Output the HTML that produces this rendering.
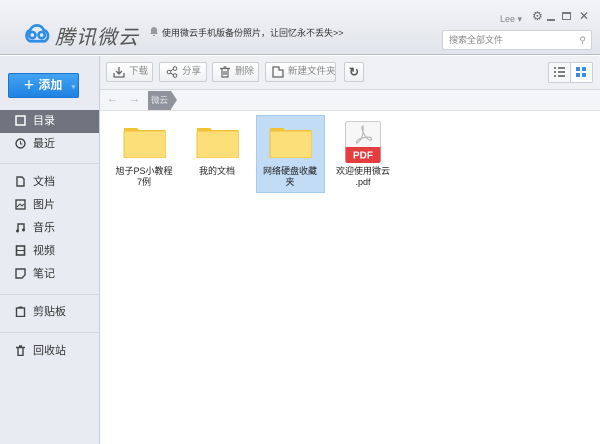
<!DOCTYPE html>
<html><head><meta charset="utf-8"><style>
*{margin:0;padding:0;box-sizing:border-box}
body{width:600px;height:444px;overflow:hidden;font-family:"Liberation Sans","Noto Sans CJK SC",sans-serif;font-size:10px;color:#333;background:#fff;position:relative}
.hdr{position:absolute;left:0;top:0;width:600px;height:55px;background:linear-gradient(#f3f4f7,#e1e4ea);border-bottom:1px solid #b5bac4}
.side{position:absolute;left:0;top:56px;width:100px;height:388px;background:#e8ebf1;border-right:1px solid #c7ccd5}
.tb{position:absolute;left:100px;top:56px;width:500px;height:34px;background:#eef0f4;border-bottom:1px solid #d5d9e0}
.nav{position:absolute;left:100px;top:90px;width:500px;height:21px;background:#f4f5f8;border-bottom:1px solid #dde0e6}
.btn{position:absolute;top:62px;height:20px;border:1px solid #c9cdd5;background:linear-gradient(#fff,#eef0f3);border-radius:2px;color:#888;font-size:9.5px;line-height:18px;padding-left:22px;white-space:nowrap;overflow:hidden}
.btn svg{position:absolute;left:6px;top:3px}
.item{position:absolute;left:0;width:99px;height:22px;line-height:22px;padding-left:33px;font-size:11px;color:#333}
.item svg{position:absolute;left:15px;top:5px}
.sep{position:absolute;left:0;width:99px;height:1px;background:#d3d7de}
.fold{position:absolute;width:43px;height:32px}
.lbl{position:absolute;font-size:9px;text-align:center;width:70px;line-height:11px;color:#222}
</style></head><body>
<div class="hdr">
<svg style="position:absolute;left:22px;top:22px" width="31" height="22" viewBox="0 0 30 20"><g fill="none" stroke="#2d8ee6" stroke-width="2.6"><path d="M8 18a6 6 0 0 1 0-11 7 7 0 0 1 13 0 6 6 0 0 1 1 11z"/><circle cx="10" cy="12" r="3"/><circle cx="19" cy="12" r="3"/></g></svg>
<div style="position:absolute;left:55px;top:21px;font-size:20px;font-style:italic;color:#555;letter-spacing:1px">腾讯微云</div>
<svg style="position:absolute;left:150px;top:27px" width="8" height="9" viewBox="0 0 8 9"><path d="M4 0a3 3 0 0 1 3 3v3l1 1H0l1-1V3a3 3 0 0 1 3-3zM3 8h2v1H3z" fill="#999"/></svg>
<div style="position:absolute;left:162px;top:26px;font-size:9px;color:#333">使用微云手机版备份照片，让回忆永不丢失&gt;&gt;</div>
<div style="position:absolute;left:500px;top:14px;font-size:9px;color:#888">Lee ▾</div>
<div style="position:absolute;left:532px;top:9px;font-size:12px;color:#666">⚙</div>
<div style="position:absolute;left:547px;top:19px;width:8px;height:2px;background:#777"></div>
<div style="position:absolute;left:562px;top:12px;width:9px;height:8px;border:1px solid #777;border-top-width:2px"></div>
<div style="position:absolute;left:579px;top:9px;font-size:12px;color:#666">✕</div>
<div style="position:absolute;left:442px;top:30px;width:150px;height:20px;background:#fff;border:1px solid #cdd1d8;border-radius:2px;font-size:9px;color:#888;line-height:18px;padding-left:6px">搜索全部文件<span style="position:absolute;right:5px;top:0;color:#999">⚲</span></div>
</div>
<div class="side">
<div style="position:absolute;left:8px;top:17px;width:71px;height:25px;background:linear-gradient(#43a3f2,#1f83e2);border:1px solid #1a74cc;border-radius:2px;color:#fff;font-size:12px;font-weight:bold;line-height:23px;padding-left:14px">＋ 添加 <span style="font-size:7px;color:#9cc9f3;margin-left:6px">▾</span></div>
<div class="item" style="top:54px;height:23px;background:#6f747f;color:#fff"><svg width="11" height="11"><rect x="1" y="1" width="9" height="9" fill="none" stroke="#fff" stroke-width="1.5"/></svg>目录</div>
<div class="item" style="top:77px"><svg width="11" height="11"><circle cx="5.5" cy="5.5" r="4.5" fill="none" stroke="#444" stroke-width="1.4"/><path d="M5.5 3v3h2" stroke="#444" fill="none"/></svg>最近</div>
<div class="sep" style="top:107px"></div>
<div class="item" style="top:115px"><svg width="11" height="11"><path d="M2 1h5l2 2v7H2z" fill="none" stroke="#444" stroke-width="1.4"/></svg>文档</div>
<div class="item" style="top:138px"><svg width="11" height="11"><rect x="1" y="1" width="9" height="9" fill="none" stroke="#444" stroke-width="1.4"/><path d="M2 8l3-3 2 2 2-2" stroke="#444" fill="none"/></svg>图片</div>
<div class="item" style="top:161px"><svg width="11" height="11"><path d="M3 9V2h6v6" fill="none" stroke="#444" stroke-width="1.4"/><circle cx="2.5" cy="9" r="1.5" fill="#444"/><circle cx="8.5" cy="8" r="1.5" fill="#444"/></svg>音乐</div>
<div class="item" style="top:184px"><svg width="11" height="11"><rect x="1.5" y="1" width="8" height="9" fill="none" stroke="#444" stroke-width="1.6"/><path d="M1.5 5.5h8" stroke="#444"/></svg>视频</div>
<div class="item" style="top:207px"><svg width="11" height="11"><path d="M1 1h9v6l-3 3H1z" fill="none" stroke="#444" stroke-width="1.4"/></svg>笔记</div>
<div class="sep" style="top:238px"></div>
<div class="item" style="top:245px"><svg width="11" height="11"><rect x="1.5" y="2" width="8" height="8.5" fill="none" stroke="#444" stroke-width="1.4"/><rect x="3.5" y="0.5" width="4" height="2" fill="#444"/></svg>剪贴板</div>
<div class="sep" style="top:276px"></div>
<div class="item" style="top:284px"><svg width="11" height="11"><path d="M1 2.5h9M3 2.5v8h5v-8M4 1h3" fill="none" stroke="#444" stroke-width="1.4"/></svg>回收站</div>
</div>
<div class="tb"></div>
<div class="btn" style="left:106px;width:47px"><svg width="12" height="12"><path d="M1 7v4h10V7M6 1v7M3 5l3 3 3-3" fill="none" stroke="#666" stroke-width="1.3"/></svg>下载</div>
<div class="btn" style="left:159px;width:48px"><svg width="12" height="12"><circle cx="3" cy="6" r="1.8" fill="none" stroke="#666"/><circle cx="9" cy="2.5" r="1.8" fill="none" stroke="#666"/><circle cx="9" cy="9.5" r="1.8" fill="none" stroke="#666"/><path d="M4.5 5l3-2M4.5 7l3 2" stroke="#666"/></svg>分享</div>
<div class="btn" style="left:212px;width:47px"><svg width="12" height="12"><path d="M1 2.5h10M3 2.5v8.5h6V2.5M4.5 1h3M5 5v4M7 5v4" fill="none" stroke="#666" stroke-width="1.2"/></svg>删除</div>
<div class="btn" style="left:265px;width:71px"><svg width="12" height="12"><path d="M1 1h6v3h4v7H1z" fill="none" stroke="#666" stroke-width="1.3"/></svg>新建文件夹</div>
<div class="btn" style="left:344px;width:20px;padding:0;text-align:center;font-size:12px;color:#555;font-weight:bold">↻</div>
<div style="position:absolute;left:548px;top:62px;width:45px;height:21px;border:1px solid #c9cdd5;background:#f6f7f9;border-radius:2px"></div>
<div style="position:absolute;left:570px;top:63px;width:22px;height:19px;background:#fff;border-left:1px solid #c9cdd5"></div>
<svg style="position:absolute;left:554px;top:67px" width="11" height="10"><path d="M0 1h2M4 1h7M0 5h2M4 5h7M0 9h2M4 9h7" stroke="#555" stroke-width="1.6"/></svg>
<svg style="position:absolute;left:576px;top:67px" width="10" height="10"><g fill="#3a8fe0"><rect width="4" height="4"/><rect x="6" width="4" height="4"/><rect y="6" width="4" height="4"/><rect x="6" y="6" width="4" height="4"/></g></svg>
<div class="nav"></div>
<div style="position:absolute;left:107px;top:93px;color:#aaa;font-size:11px">←</div>
<div style="position:absolute;left:129px;top:93px;color:#aaa;font-size:11px">→</div>
<div style="position:absolute;left:148px;top:91px;width:23px;height:19px;background:#8e939c;color:#e6e8ec;font-size:8.5px;line-height:19px;padding-left:3px">微云</div>
<div style="position:absolute;left:171px;top:91px;width:0;height:0;border-top:9.5px solid transparent;border-bottom:9.5px solid transparent;border-left:6px solid #8e939c"></div>
<div style="position:absolute;left:256px;top:115px;width:69px;height:78px;background:#c2dcf5;border:1px solid #a7cbef"></div>
<svg class="fold" style="left:123px;top:126px" viewBox="0 0 43 32"><path d="M1 2h13l2 2h26v27H1z" fill="#f2c335"/><rect x="1" y="5" width="42" height="27" rx="1" fill="#fddf7a" stroke="#efc23a"/></svg>
<svg class="fold" style="left:196px;top:126px" viewBox="0 0 43 32"><path d="M1 2h13l2 2h26v27H1z" fill="#f2c335"/><rect x="1" y="5" width="42" height="27" rx="1" fill="#fddf7a" stroke="#efc23a"/></svg>
<svg class="fold" style="left:269px;top:126px" viewBox="0 0 43 32"><path d="M1 2h13l2 2h26v27H1z" fill="#f2c335"/><rect x="1" y="5" width="42" height="27" rx="1" fill="#fddf7a" stroke="#efc23a"/></svg>
<svg style="position:absolute;left:345px;top:121px" width="36" height="42" viewBox="0 0 36 42"><rect x="0.5" y="0.5" width="35" height="41" rx="2" fill="#f7f7f7" stroke="#ccc"/><path d="M0.5 26h35v14a2 2 0 0 1-2 2h-31a2 2 0 0 1-2-2z" fill="#e53d3d"/><path d="M18 5c-2 0-1 6 3 11s7 3 5 1-12 0-14 3 1 3 4-2 2-13 2-13z" fill="none" stroke="#bbb" stroke-width="1.2"/><text x="18" y="37.5" font-size="10" font-weight="bold" fill="#fff" text-anchor="middle" font-family="Liberation Sans">PDF</text></svg>
<div class="lbl" style="left:109px;top:166px">旭子PS小教程<br>7例</div>
<div class="lbl" style="left:182px;top:166px">我的文档</div>
<div class="lbl" style="left:255px;top:166px">网络硬盘收藏<br>夹</div>
<div class="lbl" style="left:328px;top:166px">欢迎使用微云<br>.pdf</div>
</body></html>
